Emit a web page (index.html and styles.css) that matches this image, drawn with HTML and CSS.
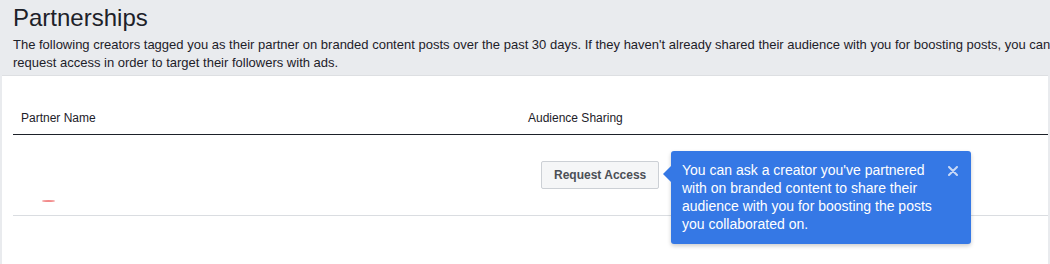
FILE: index.html
```html
<!DOCTYPE html>
<html lang="en">
<head>
    <meta charset="UTF-8">
    <meta name="viewport" content="width=device-width, initial-scale=1.0">
    <title>Partnerships</title>
    <link rel="stylesheet" href="styles.css">
</head>
<body>
    <div class="page">
        <div class="page-header">
            <h1>Partnerships</h1>
            <p class="intro">The following creators tagged you as their partner on branded content posts over the past 30 days. If they haven't already shared their audience with you for boosting posts, you can request access in order to target their followers with ads.</p>
        </div>

        <div class="panel">
            <div class="partner-table">
                <div class="table-row table-head">
                    <div class="cell">Partner Name</div>
                    <div class="cell">Audience Sharing</div>
                </div>
                <div class="table-row table-body">
                    <div class="cell name-cell">
                        <span class="name-mark"></span>
                    </div>
                    <div class="cell action-cell">
                        <button class="request-btn">Request Access</button>
                    </div>
                </div>
            </div>

            <div class="tip">
                <p>You can ask a creator you've partnered with on branded content to share their audience with you for boosting the posts you collaborated on.</p>
                <button class="tip-close" aria-label="Close">
                    <svg width="10" height="10" viewBox="0 0 10 10">
                        <path d="M1 1 L9 9 M9 1 L1 9" stroke="currentColor" stroke-width="2" stroke-linecap="round"/>
                    </svg>
                </button>
            </div>
        </div>
    </div>
</body>
</html>
```

FILE: styles.css
```css
body {
    margin: 0;
    padding: 0;
    background-color: #e9ebee;
    font-family: "Liberation Sans", Arial, sans-serif;
    color: #1d2129;
    overflow: hidden;
}
.page {
    width: 1050px;
    height: 264px;
    overflow: hidden;
    display: flex;
    flex-direction: column;
}
.page-header {
    padding: 4px 13px 3px;
}
h1 {
    margin: 0;
    font-size: 24px;
    line-height: 28px;
    font-weight: normal;
}
.intro {
    margin: 4px 0 0;
    width: 1065px;
    font-size: 13px;
    line-height: 18px;
}
.panel {
    position: relative;
    flex: 1;
    margin: 0 2px;
    background: #fff;
    border-top: 1px solid #dddfe2;
    padding-left: 11px;
}
.table-row {
    display: grid;
    grid-template-columns: 507px 1fr;
}
.cell {
    padding: 0 8px;
    font-size: 12px;
    line-height: 16px;
}
.table-head {
    padding: 34px 0 8px;
    border-bottom: 1px solid #1d2129;
}
.table-body {
    height: 80px;
    border-bottom: 1px solid #dadde1;
}
.name-cell {
    display: flex;
    align-items: flex-end;
    padding-bottom: 13px;
}
.name-mark {
    display: block;
    width: 13px;
    height: 2px;
    margin-left: 21px;
    border-radius: 50%;
    background: #f28a8a;
}
.action-cell {
    padding-top: 26px;
}
.request-btn {
    margin-left: 13px;
    height: 28px;
    padding: 0 12px;
    background: #f5f6f7;
    border: 1px solid #ccd0d5;
    border-radius: 2px;
    color: #4b4f56;
    font-family: inherit;
    font-size: 12px;
    font-weight: bold;
    cursor: pointer;
}
.tip {
    position: absolute;
    left: 669px;
    top: 75px;
    width: 300px;
    height: 93px;
    box-sizing: border-box;
    padding: 10px 34px 0 11px;
    background: #3578e5;
    border-radius: 3px;
    box-shadow: 0 2px 4px rgba(0, 0, 0, 0.2);
    color: #fff;
}
.tip::before {
    content: "";
    position: absolute;
    left: -8px;
    top: 15px;
    border-top: 8px solid transparent;
    border-bottom: 8px solid transparent;
    border-right: 8px solid #3578e5;
}
.tip p {
    margin: 0;
    font-size: 14px;
    line-height: 18px;
}
.tip-close {
    position: absolute;
    right: 13px;
    top: 15px;
    padding: 0;
    border: none;
    background: none;
    color: #c9d9f6;
    line-height: 0;
    cursor: pointer;
}
```
